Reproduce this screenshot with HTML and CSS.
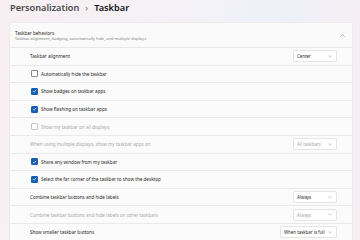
FILE: index.html
```html
<!DOCTYPE html>
<html lang="en">
<head>
    <meta charset="UTF-8">
    <meta name="viewport" content="width=device-width, initial-scale=1.0">
    <title>Taskbar</title>
    <link rel="stylesheet" href="styles.css">
</head>
<body>
    <div class="page">
        <h1 class="crumb"><span class="parent">Personalization</span><span class="sep">&#8250;</span><span class="current">Taskbar</span></h1>

        <div class="card">
            <div class="card-head">
                <div>
                    <div class="head-title">Taskbar behaviors</div>
                    <div class="head-sub">Taskbar alignment, badging, automatically hide, and multiple displays</div>
                </div>
                <svg class="chev-up" viewBox="0 0 10 6"><path d="M1 5 L5 1 L9 5" /></svg>
            </div>

            <div class="rows">
                <div class="row">
                    <span class="label">Taskbar alignment</span>
                    <div class="select">Center<svg viewBox="0 0 10 6"><path d="M1 1 L5 5 L9 1" /></svg></div>
                </div>
                <div class="row">
                    <span class="box"></span>
                    <span class="label">Automatically hide the taskbar</span>
                </div>
                <div class="row">
                    <span class="box on"><svg viewBox="0 0 10 10"><path d="M2 5.2 L4.2 7.4 L8.2 2.8" /></svg></span>
                    <span class="label">Show badges on taskbar apps</span>
                </div>
                <div class="row">
                    <span class="box on"><svg viewBox="0 0 10 10"><path d="M2 5.2 L4.2 7.4 L8.2 2.8" /></svg></span>
                    <span class="label">Show flashing on taskbar apps</span>
                </div>
                <div class="row off">
                    <span class="box"></span>
                    <span class="label">Show my taskbar on all displays</span>
                </div>
                <div class="row off">
                    <span class="label">When using multiple displays, show my taskbar apps on</span>
                    <div class="select">All taskbars<svg viewBox="0 0 10 6"><path d="M1 1 L5 5 L9 1" /></svg></div>
                </div>
                <div class="row">
                    <span class="box on"><svg viewBox="0 0 10 10"><path d="M2 5.2 L4.2 7.4 L8.2 2.8" /></svg></span>
                    <span class="label">Share any window from my taskbar</span>
                </div>
                <div class="row">
                    <span class="box on"><svg viewBox="0 0 10 10"><path d="M2 5.2 L4.2 7.4 L8.2 2.8" /></svg></span>
                    <span class="label">Select the far corner of the taskbar to show the desktop</span>
                </div>
                <div class="row">
                    <span class="label">Combine taskbar buttons and hide labels</span>
                    <div class="select">Always<svg viewBox="0 0 10 6"><path d="M1 1 L5 5 L9 1" /></svg></div>
                </div>
                <div class="row off">
                    <span class="label">Combine taskbar buttons and hide labels on other taskbars</span>
                    <div class="select">Always<svg viewBox="0 0 10 6"><path d="M1 1 L5 5 L9 1" /></svg></div>
                </div>
                <div class="row">
                    <span class="label">Show smaller taskbar buttons</span>
                    <div class="select wide">When taskbar is full<svg viewBox="0 0 10 6"><path d="M1 1 L5 5 L9 1" /></svg></div>
                </div>
            </div>
        </div>
    </div>
</body>
</html>
```

FILE: styles.css
```css
*{
    margin: 0;
    padding: 0;
    box-sizing: border-box;
}
body{
    width: 360px;
    height: 240px;
    overflow: hidden;
    font-family: "Noto Sans", "Liberation Sans", sans-serif;
    color: #262626;
    background: linear-gradient(100deg, #f7eff2 0%, #f4f2f7 45%, #eef1f8 70%, #f8eef2 100%);
}
.page{
    padding: 1px 7px 0 9px;
}
.crumb{
    font-size: 9.2px;
    line-height: 14px;
    font-weight: 600;
    margin: 0 0 7px 1px;
    display: flex;
    align-items: center;
}
.crumb .parent{
    color: #4a4a4a;
}
.crumb .sep{
    color: #777;
    font-weight: 400;
    margin: 0 6px 0 6px;
}
.crumb .current{
    color: #111;
}

.card{
    background: #fbfafb;
    border: 1px solid #eee9ec;
    border-radius: 2px;
}
.card-head{
    height: 24px;
    padding: 0 7px 0 5px;
    display: flex;
    align-items: center;
    justify-content: space-between;
}
.head-title{
    font-size: 4.6px;
    line-height: 6px;
}
.head-sub{
    font-size: 4px;
    line-height: 5px;
    color: #808080;
}
.chev-up{
    width: 5px;
    height: 3px;
    fill: none;
    stroke: #666;
    stroke-width: 1.1;
}

.rows{
    display: flex;
    flex-direction: column;
    gap: 1px;
    background: #ece8ea;
    padding-top: 1px;
}
.row{
    height: 16.6px;
    background: #fcfbfc;
    display: flex;
    align-items: center;
    padding: 0 15px 0 20px;
    font-size: 4.6px;
}
.row .label{
    flex: 1;
}
.row.off .label{
    color: #a9a7a8;
}
.box{
    width: 7px;
    height: 7px;
    border: 0.6px solid #8a8a8a;
    border-radius: 1px;
    background: #fff;
    margin: 0 3px 0 1px;
    display: flex;
    align-items: center;
    justify-content: center;
}
.row.off .box{
    border-color: #c8c6c7;
}
.box.on{
    background: #1b5fb2;
    border-color: #1b5fb2;
}
.box svg{
    width: 6px;
    height: 6px;
    fill: none;
    stroke: #fff;
    stroke-width: 1.3;
}

.select{
    width: 44px;
    height: 12px;
    background: #fff;
    border: 0.6px solid #e6e4e5;
    border-radius: 2px;
    display: flex;
    align-items: center;
    justify-content: space-between;
    padding: 0 4px 0 3px;
    font-size: 4.4px;
    color: #2a2a2a;
}
.select.wide{
    width: 57px;
}
.row.off .select{
    color: #a8a6a7;
}
.select svg{
    width: 4px;
    height: 2.5px;
    fill: none;
    stroke: #888;
    stroke-width: 1.1;
}
```
